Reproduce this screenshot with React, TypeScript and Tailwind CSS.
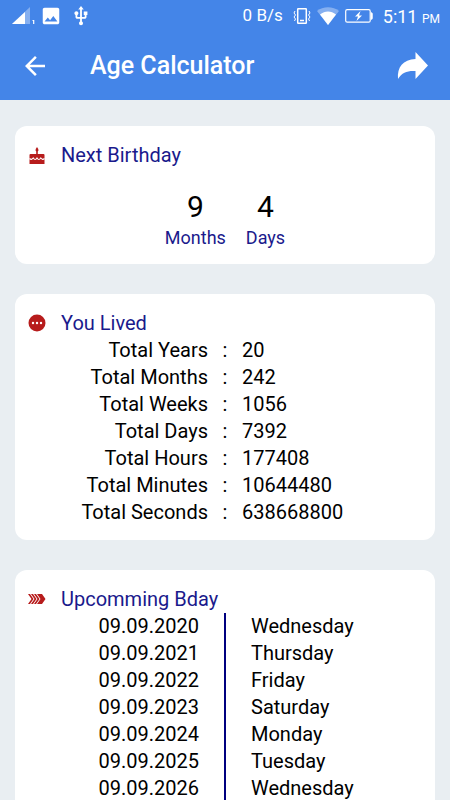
import { MdArrowBack, MdImage, MdUsb } from "react-icons/md";

const lived = [
  { label: "Total Years", value: 20 },
  { label: "Total Months", value: 242 },
  { label: "Total Weeks", value: 1056 },
  { label: "Total Days", value: 7392 },
  { label: "Total Hours", value: 177408 },
  { label: "Total Minutes", value: 10644480 },
  { label: "Total Seconds", value: 638668800 },
];

const upcoming = [
  { date: "09.09.2020", day: "Wednesday" },
  { date: "09.09.2021", day: "Thursday" },
  { date: "09.09.2022", day: "Friday" },
  { date: "09.09.2023", day: "Saturday" },
  { date: "09.09.2024", day: "Monday" },
  { date: "09.09.2025", day: "Tuesday" },
  { date: "09.09.2026", day: "Wednesday" },
];

function SignalIcon() {
  return (
    <svg width="24" height="20" viewBox="0 0 24 20" fill="#fff">
      <path d="M18 1v17H0z" opacity="0.35" />
      <path d="M13 6v12H0z" />
      <path d="M20.500 14h1.800v4h-1.200v-3h-.600z" />
    </svg>
  );
}

function VibrateIcon() {
  return (
    <svg width="18" height="18" viewBox="0 0 18 18" fill="none" stroke="#fff">
      <rect x="4.700" y="1.700" width="8.600" height="14.600" rx="0.500" strokeWidth="1.500" />
      <path d="M7 13.500h4" strokeWidth="1.500" />
      <path d="M2 4L1 6l1.500 2L1 10l1.500 2L1.500 14M16 4l1 2-1.500 2L17 10l-1.500 2 1 2" />
    </svg>
  );
}

function WifiIcon() {
  return (
    <svg width="22" height="18" viewBox="0 0 22 18" fill="#fff">
      <path d="M0 4C6-1 16-1 22 4L11 18z" opacity="0.35" />
      <path d="M3 7.500c5-4 11-4 16 0L11 18z" />
    </svg>
  );
}

function BatteryIcon() {
  return (
    <svg width="28" height="14" viewBox="0 0 28 14" fill="none" stroke="#fff">
      <rect x="0.700" y="0.700" width="24.500" height="12.500" rx="1.500" strokeWidth="1.200" />
      <path d="M26 3.500q1.500 0 1.500 1.500v4q0 1.500-1.500 1.500z" fill="#fff" strokeWidth="0.500" />
      <path d="M15.500 2L10 7.500h3L11.500 12 17 6.500h-3z" fill="#fff" stroke="none" />
    </svg>
  );
}

function ShareIcon() {
  return (
    <svg width="32" height="28" viewBox="0 0 32 28" fill="#fff">
      <path d="M18.500 0l12.500 13.500L18.500 27v-8C11 18.500 5 20 1 27 0 15 6 7.500 18.500 7z" />
    </svg>
  );
}

function CakeIcon() {
  return (
    <svg width="20" height="20" viewBox="0 0 20 20" fill="#b71c1c">
      <path d="M10 1q3 4 0 4.500Q7 5 10 1z" />
      <path d="M9.200 5h1.600v3h5.700q1 0 1 1v9h-15V9q0-1 1-1h5.700z" />
      <path
        d="M2.500 12.500c1.500 1.500 2.500 1 3.700-.500 1.500 2 2.500 2 3.800 0 1.300 2 2.300 2 3.800 0 1.200 1.500 2.200 2 3.700.500"
        fill="none"
        stroke="#fff"
        strokeWidth="1.200"
      />
    </svg>
  );
}

function DotsIcon() {
  return (
    <svg width="20" height="20" viewBox="0 0 20 20">
      <circle cx="10" cy="9" r="8.500" fill="#b71c1c" />
      <g fill="#fff">
        <circle cx="6" cy="9" r="1.200" />
        <circle cx="10" cy="9" r="1.200" />
        <circle cx="14" cy="9" r="1.200" />
      </g>
    </svg>
  );
}

function ArrowsIcon() {
  return (
    <svg width="20" height="20" viewBox="0 0 20 20" fill="#b71c1c">
      <path d="M1 4h2l3.500 5L3 14H1l3.500-5z" />
      <path d="M4 4h2l3.500 5L6 14H4l3.500-5z" />
      <path d="M7 4h2l3.500 5L9 14H7l3.500-5z" />
      <path d="M10 4h5l3.500 5-3.500 5h-5l3.500-5z" />
    </svg>
  );
}

function Card({ icon, title, children }: { icon: React.ReactNode; title: string; children: React.ReactNode }) {
  return (
    <section className="rounded-xl bg-white px-3 pt-4 pb-3.5">
      <div className="flex items-center gap-3.5">
        {icon}
        <h2 className="text-[20px] leading-[27px] text-[#1a1a8c]">{title}</h2>
      </div>
      {children}
    </section>
  );
}

function App() {
  return (
    <div className="flex h-screen flex-col bg-[#e9eef2] font-['Roboto',sans-serif] text-black">
      <header className="bg-[#4485e8] text-white">
        <div className="flex h-8 items-center justify-between pr-2.5 pl-3">
          <div className="flex items-center gap-1">
            <SignalIcon />
            <MdImage size={22} />
            <MdUsb size={22} className="ml-1" />
          </div>
          <div className="flex items-center gap-1.5">
            <span className="mr-1 text-[17px]">0 B/s</span>
            <VibrateIcon />
            <WifiIcon />
            <BatteryIcon />
            <span className="ml-1 text-[18px]">
              5:11 <small className="text-[12px]">PM</small>
            </span>
          </div>
        </div>
        <div className="flex h-[68px] items-center pr-[21px] pl-5">
          <button aria-label="Back">
            <MdArrowBack size={30} />
          </button>
          <h1 className="ml-10 flex-1 text-[25px] font-medium">Age Calculator</h1>
          <button aria-label="Share">
            <ShareIcon />
          </button>
        </div>
      </header>

      <main className="flex flex-1 flex-col gap-[30px] overflow-y-auto px-[15px] py-[26px] [scrollbar-width:none] *:shrink-0">
        <Card icon={<CakeIcon />} title="Next Birthday">
          <div className="mt-5 flex justify-center gap-5 text-center">
            <div>
              <p className="text-[30px] leading-9">9</p>
              <p className="text-[18px] leading-[25px] text-[#1a1a8c]">Months</p>
            </div>
            <div>
              <p className="text-[30px] leading-9">4</p>
              <p className="text-[18px] leading-[25px] text-[#1a1a8c]">Days</p>
            </div>
          </div>
        </Card>

        <Card icon={<DotsIcon />} title="You Lived">
          <table className="w-full table-fixed text-[20px] leading-[27px]">
            <tbody>
              {lived.map((item) => (
                <tr key={item.label}>
                  <th className="text-right font-normal">{item.label}</th>
                  <td className="w-[34px] text-center">:</td>
                  <td>{item.value}</td>
                </tr>
              ))}
            </tbody>
          </table>
        </Card>

        <Card icon={<ArrowsIcon />} title="Upcomming Bday">
          <table className="w-full table-fixed text-[20px] leading-[27px]">
            <tbody>
              {upcoming.map((item) => (
                <tr key={item.date}>
                  <td className="w-1/2 border-r-2 border-[#00007f] pr-[25px] text-right">{item.date}</td>
                  <td className="pl-[25px]">{item.day}</td>
                </tr>
              ))}
            </tbody>
          </table>
        </Card>
      </main>
    </div>
  );
}

export default App;
